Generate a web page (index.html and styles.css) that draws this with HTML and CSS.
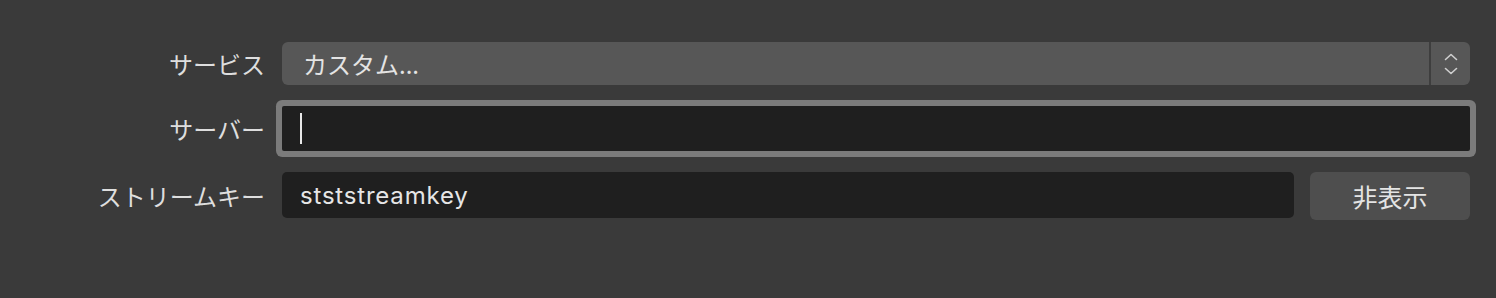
FILE: index.html
```html
<!DOCTYPE html>
<html lang="ja">
<head>
<meta charset="utf-8">
<link rel="stylesheet" href="styles.css">
</head>
<body>
<div class="form">
  <div class="label">サービス</div>
  <div class="combo">
    <div class="combo-value">カスタム...</div>
    <div class="combo-arrows">
      <svg width="16" height="26" viewBox="0 0 16 26">
        <path d="M2.5 8.5 L8 3.5 L13.5 8.5" fill="none" stroke="#cfcfcf" stroke-width="1.6" stroke-linecap="round" stroke-linejoin="round"/>
        <path d="M2.5 17.5 L8 22.5 L13.5 17.5" fill="none" stroke="#cfcfcf" stroke-width="1.6" stroke-linecap="round" stroke-linejoin="round"/>
      </svg>
    </div>
  </div>

  <div class="label">サーバー</div>
  <div class="field focused"><span class="caret"></span></div>

  <div class="label">ストリームキー</div>
  <div class="key-row">
    <div class="field key">stststreamkey</div>
    <div class="button">非表示</div>
  </div>
</div>
</body>
</html>
```

FILE: styles.css
```css
html, body {
  margin: 0;
  padding: 0;
  background: #3a3a3a;
  height: 298px;
  overflow: hidden;
}

body {
  font-family: "Inter", "Noto Sans CJK JP", sans-serif;
  color: #e2e2e2;
}

.form {
  display: grid;
  grid-template-columns: 265px 1fr;
  column-gap: 17px;
  row-gap: 21px;
  padding: 42px 26px 0 0;
  align-items: center;
}

.label {
  text-align: right;
  font-family: "Noto Sans CJK JP", sans-serif;
  font-size: 24px;
  color: #dedede;
  line-height: 1;
}

.combo {
  height: 43px;
  background: #575757;
  border-radius: 6px;
  display: flex;
  align-items: stretch;
}

.combo-value {
  flex: 1;
  display: flex;
  align-items: center;
  padding-left: 21px;
  font-family: "Noto Sans CJK JP", sans-serif;
  font-size: 24px;
  color: #e4e4e4;
  border-right: 2px solid #3e3e3e;
}

.combo-arrows {
  width: 39px;
  display: flex;
  align-items: center;
  justify-content: center;
}

.field {
  height: 45px;
  background: #1f1f1f;
  border-radius: 3px;
  display: flex;
  align-items: center;
  padding-left: 18px;
  box-sizing: border-box;
}

.focused {
  box-shadow: 0 0 0 6px #7b7b7b;
  border-radius: 2px;
}

.caret {
  width: 2px;
  height: 31px;
  background: #e8e8e8;
}

.key-row {
  display: flex;
  align-items: flex-start;
  gap: 16px;
}

.key {
  flex: 1;
  height: 46px;
  border-radius: 5px;
  font-size: 24px;
  letter-spacing: 0.8px;
  color: #e6e6e6;
}

.button {
  width: 160px;
  height: 48px;
  background: #4e4e4e;
  border-radius: 6px;
  display: flex;
  align-items: center;
  justify-content: center;
  font-family: "Noto Sans CJK JP", sans-serif;
  font-size: 25px;
  color: #e4e4e4;
}
```
